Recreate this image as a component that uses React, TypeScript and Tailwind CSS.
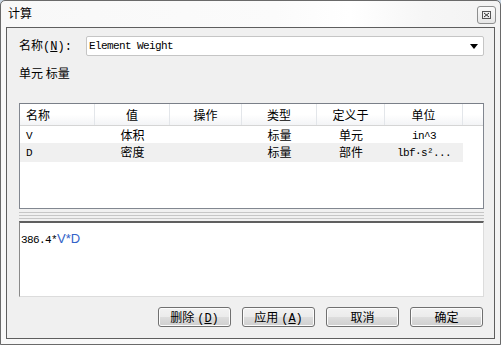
const cjk = { fontFamily: '"Noto Sans CJK SC", "Noto Sans", sans-serif' };
const mono = { fontFamily: '"Liberation Mono", "Noto Sans CJK SC", monospace' };

const columns = [
  { title: '名称', align: 'left' },
  { title: '值', align: 'center' },
  { title: '操作', align: 'center' },
  { title: '类型', align: 'center' },
  { title: '定义于', align: 'center' },
  { title: '单位', align: 'center' },
];

const rows = [
  { name: 'V', value: '体积', op: '', type: '标量', def: '单元', unit: 'in^3', shade: false },
  { name: 'D', value: '密度', op: '', type: '标量', def: '部件', unit: 'lbf·s²...', shade: true },
];

function Mnemonic({ text, letter, gap }: { text: string; letter: string; gap?: boolean }) {
  return (
    <span style={cjk}>
      {text}
      <span className={gap ? 'ml-[3px]' : ''} style={mono}>
        (<span className="underline underline-offset-1">{letter}</span>)
      </span>
    </span>
  );
}

function WinButton({ children }: { children: React.ReactNode }) {
  return (
    <button className="w-[73px] h-[20px] rounded-[3px] border border-[#707070] bg-[linear-gradient(#f2f2f2_0%,#ebebeb_50%,#dddddd_51%,#cfcfcf_100%)] text-[12px] leading-[18px] text-black shadow-[inset_0_0_0_1px_#fcfcfc]">
      {children}
    </button>
  );
}

export default function App() {
  return (
    <div className="w-[501px] h-[345px] bg-[#c9d6e3]">
      <div className="w-[501px] h-[345px] border border-[#6a6a6a] rounded-t-[5px] bg-[linear-gradient(90deg,#f8f8f8_0%,#fbfbfb_55%,#ffffff_70%,#f6f6f6_85%,#f3f3f3_100%)] flex flex-col">
        {/* Title bar */}
        <div className="h-[26px] flex items-start justify-between pl-[7px] pr-[4px] pt-[4px]">
          <span className="text-[12px] leading-[16px] text-black" style={cjk}>计算</span>
          <div className="w-[19px] h-[18px] mt-[1px] rounded-[3px] border border-[#8e8f8f] bg-[linear-gradient(#fbfbfb,#e6e6e6)] flex items-center justify-center">
            <svg width="9" height="8" viewBox="0 0 9 8">
              <rect x="0.5" y="0.5" width="8" height="7" fill="none" stroke="#555" />
              <path d="M2 2 L7 6 M7 2 L2 6" stroke="#333" strokeWidth="1" />
            </svg>
          </div>
        </div>

        {/* Client area */}
        <div className="mx-[5px] mb-[5px] flex-1 border border-[#5e5e5e] bg-[#f0f0f0] pl-[12px] pr-[10px] pt-[8px] flex flex-col text-black">
          <div className="flex h-[20px] items-center">
            <div className="w-[67px] text-[12px]">
              <Mnemonic text="名称" letter="N" />
              <span style={mono}>:</span>
            </div>
            <div className="flex-1 h-[20px] border border-[#c5c5c5] bg-white rounded-[2px] flex items-center justify-between pl-[2px] pr-[5px]">
              <span className="text-[11px] tracking-[-0.6px]" style={mono}>Element Weight</span>
              <svg width="8" height="5" viewBox="0 0 8 5">
                <path d="M0 0 H8 L4 5 Z" fill="#000" />
              </svg>
            </div>
          </div>

          <div className="mt-[10px] h-[14px] leading-[14px] text-[12px]" style={cjk}>单元 标量</div>

          {/* Table */}
          <div className="mt-[23px] h-[106px] border border-[#828790] border-t-[#7a7f88] bg-white">
            <div className="grid grid-cols-[75px_75px_72px_75px_68px_78px_1fr] h-[22px] border-b border-[#d5d5d5] bg-[linear-gradient(#ffffff_0%,#ffffff_50%,#f3f4f6_100%)]">
              {columns.map((c) => (
                <div
                  key={c.title}
                  className={`border-r border-[#e3e6ea] text-[12px] leading-[21px] ${c.align === 'left' ? 'pl-[6px] text-left' : 'text-center'}`}
                  style={cjk}
                >
                  {c.title}
                </div>
              ))}
              <div />
            </div>
            {rows.map((r) => (
              <div
                key={r.name}
                className="grid grid-cols-[75px_75px_72px_75px_68px_78px_1fr] h-[17px] text-[12px] leading-[17px]"
              >
                <div className={`pl-[6px] ${r.shade ? 'bg-[#f0f0f0]' : ''}`}>
                  <span className="text-[11px] tracking-[-0.6px]" style={mono}>{r.name}</span>
                </div>
                <div className={`text-center ${r.shade ? 'bg-[#f0f0f0]' : ''}`} style={cjk}>{r.value}</div>
                <div className={`text-center ${r.shade ? 'bg-[#f0f0f0]' : ''}`} style={cjk}>{r.op}</div>
                <div className={`text-center ${r.shade ? 'bg-[#f0f0f0]' : ''}`} style={cjk}>{r.type}</div>
                <div className={`text-center ${r.shade ? 'bg-[#f0f0f0]' : ''}`} style={cjk}>{r.def}</div>
                <div className={`text-center ${r.shade ? 'bg-[#f0f0f0]' : ''}`}>
                  <span className="text-[11px] tracking-[-0.6px]" style={mono}>{r.unit}</span>
                </div>
                <div />
              </div>
            ))}
          </div>

          {/* Splitter */}
          <div className="h-[12px] flex flex-col pt-[3px] gap-[2px]">
            <div className="h-[1px] bg-[#c6c6c6]" />
            <div className="h-[1px] bg-[#c6c6c6]" />
            <div className="h-[1px] bg-[#c6c6c6]" />
          </div>

          {/* Expression */}
          <div className="h-[76px] border border-[#dcdcdc] border-t-[#5f5f5f] border-l-[#8a8a8a] border-t-2 bg-white pl-[1px] pt-[2px]">
            <span className="text-[11px] tracking-[-0.6px]" style={mono}>386.4*</span>
            <span className="text-[13px] text-[#3262c8]" style={{ fontFamily: '"Liberation Sans", Arial, sans-serif' }}>V*D</span>
          </div>

          {/* Buttons */}
          <div className="mt-[10px] flex justify-end gap-[11px] pr-[1px]">
            <WinButton><Mnemonic text="删除" letter="D" gap /></WinButton>
            <WinButton><Mnemonic text="应用" letter="A" gap /></WinButton>
            <WinButton><span style={cjk}>取消</span></WinButton>
            <WinButton><span style={cjk}>确定</span></WinButton>
          </div>
        </div>
      </div>
    </div>
  );
}
